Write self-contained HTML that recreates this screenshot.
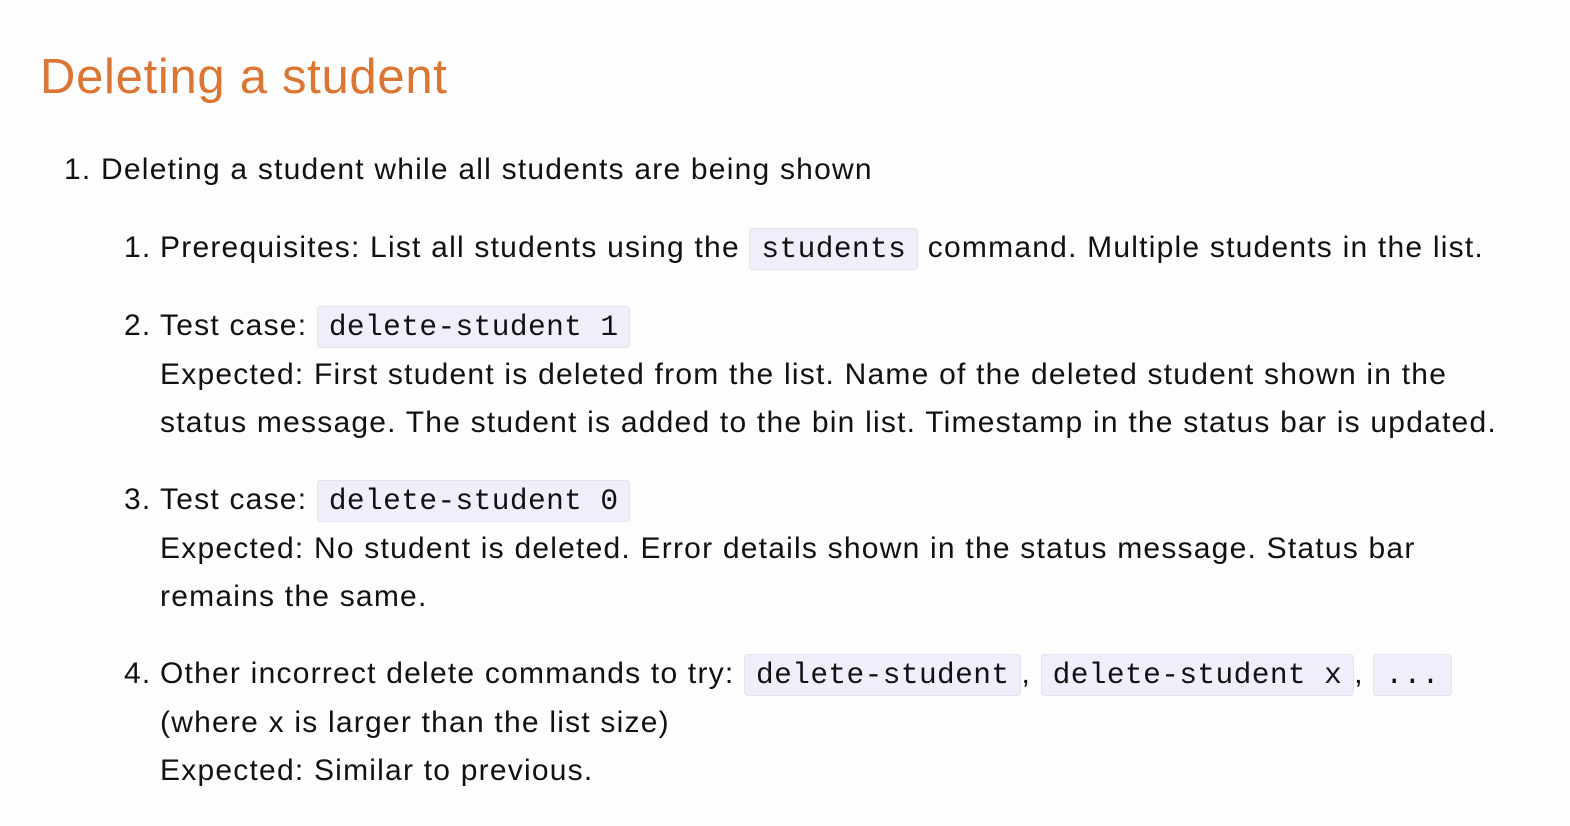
<!DOCTYPE html>
<html><head><style>
body{margin:0;background:#fdfdfd;width:1570px;height:826px;overflow:hidden;font-family:"Liberation Sans",sans-serif;color:#111;}
h1{position:absolute;left:40px;top:47px;margin:0;font-weight:normal;font-size:49px;line-height:60px;color:#db7532;letter-spacing:0.7px;}
.l{position:absolute;font-size:30px;line-height:48px;white-space:nowrap;letter-spacing:1.22px;}
code{font-family:"Liberation Mono",monospace;font-size:29.5px;letter-spacing:0.4px;background:#efeffc;border:1px solid #e3e3ee;border-radius:4px;padding:3px 11px;}
</style></head><body>
<h1>Deleting a student</h1>
<div class="l" style="left:64px;top:146px">1. Deleting a student while all students are being shown</div>
<div class="l" style="left:124px;top:224px">1.</div>
<div class="l" style="left:160px;top:224px">Prerequisites: List all students using the <code>students</code> command. Multiple students in the list.</div>
<div class="l" style="left:124px;top:302px">2.</div>
<div class="l" style="left:160px;top:302px">Test case: <code>delete-student 1</code><br>Expected: First student is deleted from the list. Name of the deleted student shown in the<br>status message. The student is added to the bin list. Timestamp in the status bar is updated.</div>
<div class="l" style="left:124px;top:476px">3.</div>
<div class="l" style="left:160px;top:476px">Test case: <code>delete-student 0</code><br>Expected: No student is deleted. Error details shown in the status message. Status bar<br>remains the same.</div>
<div class="l" style="left:124px;top:650px">4.</div>
<div class="l" style="left:160px;top:650px">Other incorrect delete commands to try: <code>delete-student</code>, <code>delete-student x</code>, <code>...</code><br>(where x is larger than the list size)<br>Expected: Similar to previous.</div>
</body></html>
